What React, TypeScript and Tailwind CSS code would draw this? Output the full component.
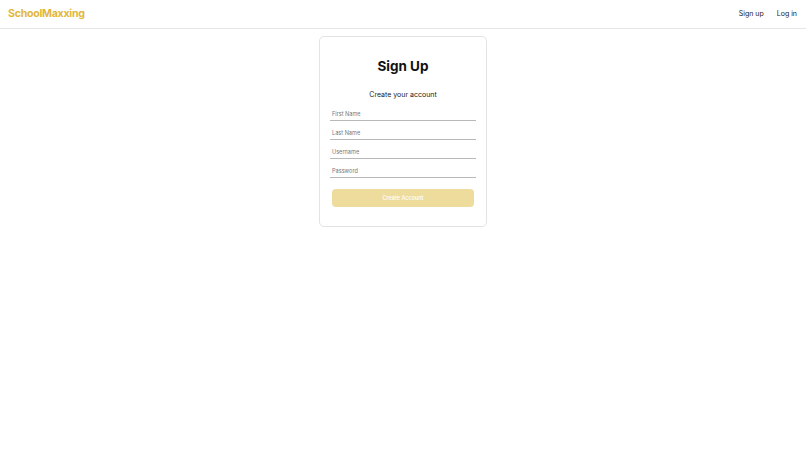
const fields = ["First Name", "Last Name", "Username", "Password"];

export default function App() {
  return (
    <div className="min-h-[453px] bg-white font-['Inter',sans-serif] text-[#111]">
      <header className="h-[29px] px-2 flex items-center justify-between border-b border-[#e5e5e5]">
        <span className="text-[10.6px] font-bold text-[#e2b63a] tracking-tight">SchoolMaxxing</span>
        <nav className="flex items-center gap-[13px] text-[7px] text-[#222] pr-[1px]">
          <span>Sign up</span>
          <span>Log in</span>
        </nav>
      </header>
      <main className="flex justify-center pt-[7px]">
        <div className="w-[168px] h-[191px] border border-[#e3e3e3] rounded-[5px] px-[10px] pt-[23px] flex flex-col items-center">
          <h1 className="text-[13.5px] font-bold leading-none">Sign Up</h1>
          <p className="text-[7px] mt-[17px] text-[#222] leading-none">Create your account</p>
          <form className="w-full mt-[13px] flex flex-col gap-[9.1px]">
            {fields.map((f) => (
              <div key={f} className="border-b-[1.5px] border-[#b8b8b8] pb-[2px] pl-[2px] text-[5.6px] text-[#777] leading-[7px]">
                {f}
              </div>
            ))}
            <button
              type="button"
              className="mt-[2px] mx-[2px] h-[18.5px] rounded-[4px] bg-[#eedc9d] text-white text-[5.5px] font-medium"
            >
              Create Account
            </button>
          </form>
        </div>
      </main>
    </div>
  );
}
